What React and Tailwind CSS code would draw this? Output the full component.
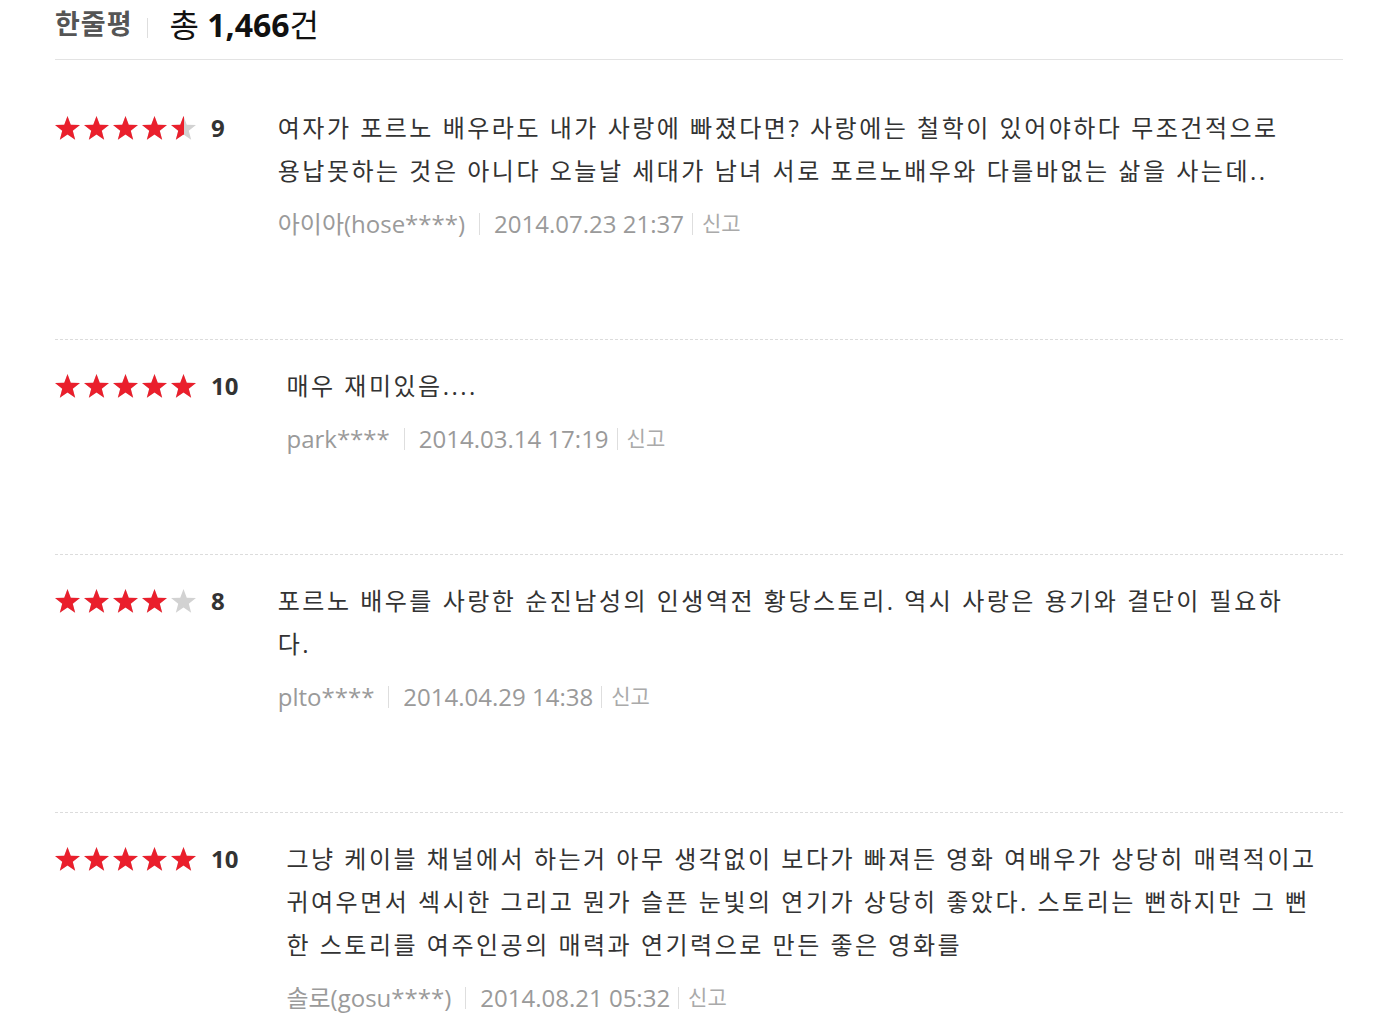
import React from 'react';

const reviews = [
  {
    rating: 4.5,
    score: 9,
    lines: [
      '여자가 포르노 배우라도 내가 사랑에 빠졌다면? 사랑에는 철학이 있어야하다 무조건적으로',
      '용납못하는 것은 아니다 오늘날 세대가 남녀 서로 포르노배우와 다를바없는 삶을 사는데..',
    ],
    user: '아이아(hose****)',
    date: '2014.07.23 21:37',
  },
  {
    rating: 5,
    score: 10,
    lines: ['매우 재미있음....'],
    user: 'park****',
    date: '2014.03.14 17:19',
  },
  {
    rating: 4,
    score: 8,
    lines: [
      '포르노 배우를 사랑한 순진남성의 인생역전 황당스토리. 역시 사랑은 용기와 결단이 필요하',
      '다.',
    ],
    user: 'plto****',
    date: '2014.04.29 14:38',
  },
  {
    rating: 5,
    score: 10,
    lines: [
      '그냥 케이블 채널에서 하는거 아무 생각없이 보다가 빠져든 영화 여배우가 상당히 매력적이고',
      '귀여우면서 섹시한 그리고 뭔가 슬픈 눈빛의 연기가 상당히 좋았다. 스토리는 뻔하지만 그 뻔',
      '한 스토리를 여주인공의 매력과 연기력으로 만든 좋은 영화를',
    ],
    user: '솔로(gosu****)',
    date: '2014.08.21 05:32',
  },
];

const STAR_POINTS =
  '13,0 16.4,9 26,9.4 18.5,15.4 21,24.7 13,19.4 5,24.7 7.5,15.4 0,9.4 9.6,9';

function StarShape({ color }) {
  return (
    <svg viewBox="0 0 26 25" className="w-[25px] h-[24px] block">
      <polygon points={STAR_POINTS} fill={color} />
    </svg>
  );
}

function Star({ fill }) {
  // fill: 0, 0.5 or 1
  return (
    <div className="relative w-[25px] h-[24px]">
      <StarShape color="#d2d2d2" />
      {fill > 0 && (
        <div
          className="absolute left-0 top-0 h-[24px] overflow-hidden"
          style={{ width: `${fill * 25}px` }}
        >
          <StarShape color="#ea1f2c" />
        </div>
      )}
    </div>
  );
}

function Stars({ rating }) {
  return (
    <div className="flex gap-[4px]">
      {[1, 2, 3, 4, 5].map((i) => {
        let f = 0;
        if (rating >= i) f = 1;
        else if (rating >= i - 0.5) f = 0.5;
        return <Star key={i} fill={f} />;
      })}
    </div>
  );
}

function Review({ r, first }) {
  return (
    <div
      className={
        'flex pb-[94px] ' +
        (first ? 'pt-[46px]' : 'pt-[24px] border-t border-dashed border-[#dcdcdc]')
      }
    >
      <div className="flex items-center h-[43px] shrink-0">
        <Stars rating={r.rating} />
        <span className="ml-[15px] text-[24px] font-bold text-[#333]">{r.score}</span>
      </div>
      <div className={r.score >= 10 ? 'ml-[48px]' : 'ml-[53px]'}>
        <div className="text-[24px] leading-[43px] text-[#333] tracking-[2.5px]">
          {r.lines.map((l, i) => (
            <div key={i} className="whitespace-nowrap">{l}</div>
          ))}
        </div>
        <div className="mt-[10px] flex items-center h-[43px] text-[24px] text-[#9a9a9a]">
          <span>{r.user}</span>
          <span className="mx-[14px] w-px h-[22px] bg-[#dedede]" />
          <span>{r.date}</span>
          <span className="ml-[8px] mr-[9px] w-px h-[22px] bg-[#dedede]" />
          <span className="text-[21px] text-[#aaa]">신고</span>
        </div>
      </div>
    </div>
  );
}

export default function App() {
  return (
    <div
      className="bg-white min-h-screen pl-[55px] pr-[45px]"
      style={{ fontFamily: '"Open Sans", "Noto Sans CJK KR", sans-serif' }}
    >
      <div className="h-[60px] flex items-center border-b border-[#e3e3e3] pb-[10px]">
        <span className="text-[27px] font-bold text-[#555] tracking-[1px]">한줄평</span>
        <span className="ml-[14px] mt-[6px] w-px h-[20px] bg-[#dedede]" />
        <span className="ml-[22px] text-[32px] text-[#111]">
          총 <b className="font-bold">1,466</b>건
        </span>
      </div>
      {reviews.map((r, i) => (
        <Review key={i} r={r} first={i === 0} />
      ))}
    </div>
  );
}
